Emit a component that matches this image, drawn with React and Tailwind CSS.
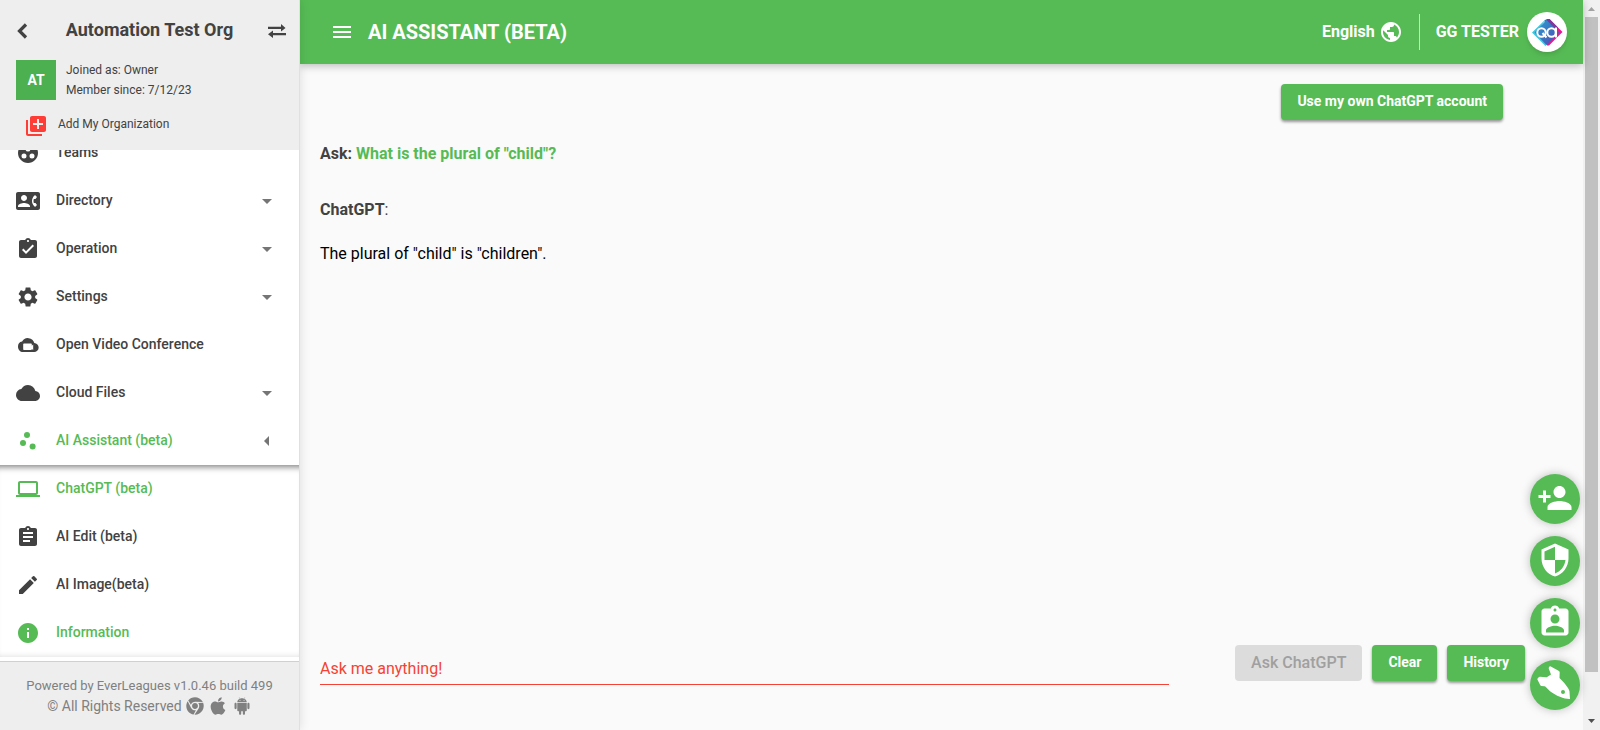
import React from "react";
import {
  MdGroupWork, MdContactPhone, MdAssignmentTurnedIn, MdSettings, MdCloud, MdScatterPlot,
  MdLaptop, MdAssignment, MdEdit, MdInfo, MdPublic, MdPersonAdd, MdSecurity,
  MdAssignmentInd, MdLibraryAdd, MdArrowDropDown, MdArrowLeft, MdMenu,
} from "react-icons/md";
import { FaChrome, FaApple } from "react-icons/fa";
import { AiFillAndroid } from "react-icons/ai";

function CloudVideo({ className }) {
  return (
    <svg viewBox="0 0 24 24" className={className} fill="currentColor" aria-hidden="true">
      <path
        fillRule="evenodd"
        d="M18.3 10A6.600 6.600 0 0 0 6.100 8.600 5 5 0 0 0 2 13.700c0 3 2.200 5.300 5 5.300h11a4.500 4.500 0 0 0 .3-9zM7.900 10.500h7.200c.4 0 .7.3.7.700v1.500l1.400-1.200v5.600l-1.400-1.200v.4c0 .4-.3.700-.7.700H7.900a.7.7 0 0 1-.7-.7v-5.100c0-.4.3-.7.7-.7z"
      />
    </svg>
  );
}

function BackChevron({ className }) {
  return (
    <svg viewBox="0 0 16 16" className={className} fill="none" stroke="currentColor" strokeWidth="3.200" aria-hidden="true">
      <path d="M10 1.500 3.500 8 10 14.500" />
    </svg>
  );
}

function SwapArrows({ className }) {
  return (
    <svg viewBox="0 0 20 16" className={className} fill="currentColor" aria-hidden="true">
      <path d="M1 3.800h13V1l4.500 3.900L14 8.500V6H1zM19 10H6V7.500L1 11.300 6 15v-2.800h13z" />
    </svg>
  );
}

function Rocket({ className }) {
  return (
    <svg viewBox="0 0 36 36" className={className} fill="currentColor" aria-hidden="true">
      <path
        fillRule="evenodd"
        d="M12.500.5Q13 0 13.800.4L22 5Q22.800 5.500 22.700 6.500L22.500 12C27 16.500 32 22 32.500 25.500L33 33C28 33.300 19 30 13 25.300L8.800 21Q8.300 20.300 7.500 20.200L4.500 20Q3.700 19.900 3.300 19.200L.5 13.800Q.1 13 .6 12.500L1.700 11.300Q2.200 10.700 3 10.800L9 11.300Q10 11.300 10.500 10.800L14 8.500 11.800 2.800Q11.500 2 12 1.200zM26 23.900a2 2 0 1 0 0 4 2 2 0 0 0 0-4z"
      />
    </svg>
  );
}

function QaLogo({ className }) {
  return (
    <svg viewBox="0 0 40 40" className={className} aria-hidden="true">
      <defs>
        <linearGradient id="qaBlue" x1="0" y1="0" x2="1" y2="1">
          <stop offset="0" stopColor="#25a5d4" />
          <stop offset="1" stopColor="#5146b0" />
        </linearGradient>
      </defs>
      <path d="M20 7 22.500 7 35.500 20 22 33.500 20 33.500z" fill="#ec1590" />
      <path d="M20 7 22.500 7 31 15.500 28 18 17 9z" fill="#7a3a9c" />
      <path d="M19 7 5 20.500 18.500 34 21 31 10 20.500z" fill="#36cbe0" />
      <path d="M19.500 8 32 20.500 19.500 33 7.500 20.500z" fill="url(#qaBlue)" />
      <g fill="none" stroke="#fff" strokeWidth="2">
        <circle cx="14.500" cy="20.500" r="4.200" />
        <path d="m15.500 21 4 4.500" />
        <circle cx="24.500" cy="20.500" r="4.200" />
        <path d="M29 15.500v10" />
      </g>
    </svg>
  );
}

const mainItems = [
  { label: "Teams", icon: MdGroupWork },
  { label: "Directory", icon: MdContactPhone, arrow: "down" },
  { label: "Operation", icon: MdAssignmentTurnedIn, arrow: "down" },
  { label: "Settings", icon: MdSettings, arrow: "down" },
  { label: "Open Video Conference", icon: CloudVideo },
  { label: "Cloud Files", icon: MdCloud, arrow: "down" },
  { label: "AI Assistant (beta)", icon: MdScatterPlot, arrow: "left", active: true },
];

const subItems = [
  { label: "ChatGPT (beta)", icon: MdLaptop, active: true },
  { label: "AI Edit (beta)", icon: MdAssignment },
  { label: "AI Image(beta)", icon: MdEdit },
  { label: "Information", icon: MdInfo, active: true },
];

function NavItem({ label, icon: Icon, arrow, active }) {
  return (
    <li>
      <a
        href="#"
        className={`flex h-12 items-center gap-4 pl-4 pr-5 text-sm font-medium ${active ? "text-[#56bb55]" : "text-[#424242]"}`}
      >
        <Icon className="size-6 shrink-0" />
        <span className="flex-1 pb-0.5">{label}</span>
        {arrow === "down" && <MdArrowDropDown className="size-6 text-[#757575]" />}
        {arrow === "left" && <MdArrowLeft className="size-6 text-[#757575]" />}
      </a>
    </li>
  );
}

function Sidebar() {
  return (
    <aside className="z-20 flex w-[300px] shrink-0 flex-col border-r border-[#e0e0e0] bg-white text-[#424242] shadow-[0_0_10px_rgba(0,0,0,0.12)]">
      <header className="h-[150px] shrink-0 bg-[#eeeeee]">
        <div className="flex h-15 items-center justify-between pl-4 pr-3">
          <button type="button" aria-label="Back" className="pt-0.5">
            <BackChevron className="size-4" />
          </button>
          <h2 className="text-lg font-bold">Automation Test Org</h2>
          <button type="button" aria-label="Switch organization" className="pt-0.5">
            <SwapArrows className="h-4 w-5" />
          </button>
        </div>
        <div className="flex items-center gap-2.5 px-4">
          <div className="flex size-10 items-center justify-center bg-[#4caf50] text-sm font-bold text-white">AT</div>
          <div className="text-xs leading-5">
            <p>Joined as: Owner</p>
            <p>Member since: 7/12/23</p>
          </div>
        </div>
        <button type="button" className="mt-3.5 flex items-center gap-2.5 pl-6 text-xs">
          <MdLibraryAdd className="size-6 text-[#ff3d37]" />
          <span className="pb-1">Add My Organization</span>
        </button>
      </header>
      <nav className="flex min-h-0 flex-1 flex-col justify-end overflow-hidden pb-1">
        <ul>
          {mainItems.map((item) => <NavItem key={item.label} {...item} />)}
        </ul>
        <ul className="shadow-[inset_0_8px_6px_-6px_rgba(0,0,0,0.5),inset_0_-6px_6px_-6px_rgba(0,0,0,0.15)]">
          {subItems.map((item) => <NavItem key={item.label} {...item} />)}
        </ul>
      </nav>
      <footer className="flex h-[69px] shrink-0 flex-col justify-center border-t border-[#d0d0d0] bg-[#eeeeee] text-center text-[#808080]">
        <p className="text-[13px] leading-5">Powered by EverLeagues v1.0.46 build 499</p>
        <p className="flex items-center justify-center gap-1 text-sm leading-5">
          © All Rights Reserved
          <a href="#" aria-label="Chrome"><FaChrome className="size-[18px]" /></a>
          <a href="#" aria-label="Apple"><FaApple className="size-5" /></a>
          <a href="#" aria-label="Android"><AiFillAndroid className="size-5" /></a>
        </p>
      </footer>
    </aside>
  );
}

function TopBar() {
  return (
    <header className="z-10 flex h-16 shrink-0 items-center justify-between bg-[#56bb55] pl-[30px] pr-4 text-white shadow-[0_2px_8px_rgba(0,0,0,0.25)]">
      <div className="flex items-center gap-3.5">
        <button type="button" aria-label="Menu"><MdMenu className="size-6" /></button>
        <h1 className="text-xl font-bold">AI ASSISTANT (BETA)</h1>
      </div>
      <div className="flex items-center">
        <button type="button" className="flex items-center gap-1 pr-4 text-base font-bold">
          English
          <MdPublic className="size-6" />
        </button>
        <button type="button" className="flex h-9 items-center gap-2 border-l border-[#c8e6c9] pl-4 text-base font-bold">
          GG TESTER
          <span className="size-10 rounded-full bg-white shadow-md">
            <QaLogo className="size-10" />
          </span>
        </button>
      </div>
    </header>
  );
}

function Button({ children, disabled }) {
  return (
    <button
      type="button"
      disabled={disabled}
      className={`h-9 rounded px-4 ${disabled ? "bg-[#dcdcdc] text-base font-medium text-[#a0a0a0]" : "bg-[#56bb55] pb-0.5 text-sm font-bold text-white shadow-[0_2px_3px_rgba(0,0,0,0.4)]"}`}
    >
      {children}
    </button>
  );
}

const floating = [
  { label: "Invite person", icon: MdPersonAdd },
  { label: "Security", icon: MdSecurity },
  { label: "Assignments", icon: MdAssignmentInd },
  { label: "Launch", icon: Rocket },
];

function Scrollbar() {
  return (
    <div aria-hidden="true" className="flex w-[17px] shrink-0 flex-col items-center bg-[#f1f1f1]">
      <svg viewBox="0 0 17 17" className="size-[17px]"><path d="M5 11h7L8.500 7z" fill="#a3a3a3" /></svg>
      <div className="w-[13px] flex-1 bg-[#c1c1c1]" />
      <div className="h-[41px]" />
      <svg viewBox="0 0 17 17" className="size-[17px]"><path d="M5 6h7L8.500 10z" fill="#505050" /></svg>
    </div>
  );
}

export default function App() {
  return (
    <div className="flex h-screen overflow-hidden bg-[#fafafa] font-[Roboto,sans-serif]">
      <Sidebar />
      <div className="relative flex min-w-0 flex-1 flex-col">
        <TopBar />
        <main className="flex flex-1 flex-col pl-5">
          <div className="flex justify-end pr-20 pt-5">
            <Button>Use my own ChatGPT account</Button>
          </div>
          <section className="flex-1 pt-[22px] text-base leading-6 text-[#424242]">
            <p className="font-bold">
              Ask: <span className="text-[#56bb55]">What is the plural of "child"?</span>
            </p>
            <p className="mt-8"><strong>ChatGPT</strong>:</p>
            <p className="mt-5 text-black">The plural of "child" is "children".</p>
          </section>
          <form className="flex items-end pb-[45px] pr-[58px]">
            <input
              type="text"
              aria-label="Ask me anything!"
              placeholder="Ask me anything!"
              className="h-8 min-w-0 flex-1 border-b border-[#f44336] bg-transparent text-base outline-none placeholder:text-[#f44336]"
            />
            <div className="ml-[66px] flex gap-2.5 pb-1">
              <Button disabled>Ask ChatGPT</Button>
              <Button>Clear</Button>
              <Button>History</Button>
            </div>
          </form>
        </main>
        <div className="absolute bottom-5 right-[3px] flex flex-col gap-3">
          {floating.map(({ label, icon: Icon }) => (
            <button
              key={label}
              type="button"
              aria-label={label}
              className="flex size-[50px] items-center justify-center rounded-full bg-[#56bb55] pb-0.5 text-white shadow-[0_0_10px_rgba(0,0,0,0.25)]"
            >
              <Icon className="size-9" />
            </button>
          ))}
        </div>
      </div>
      <Scrollbar />
    </div>
  );
}
